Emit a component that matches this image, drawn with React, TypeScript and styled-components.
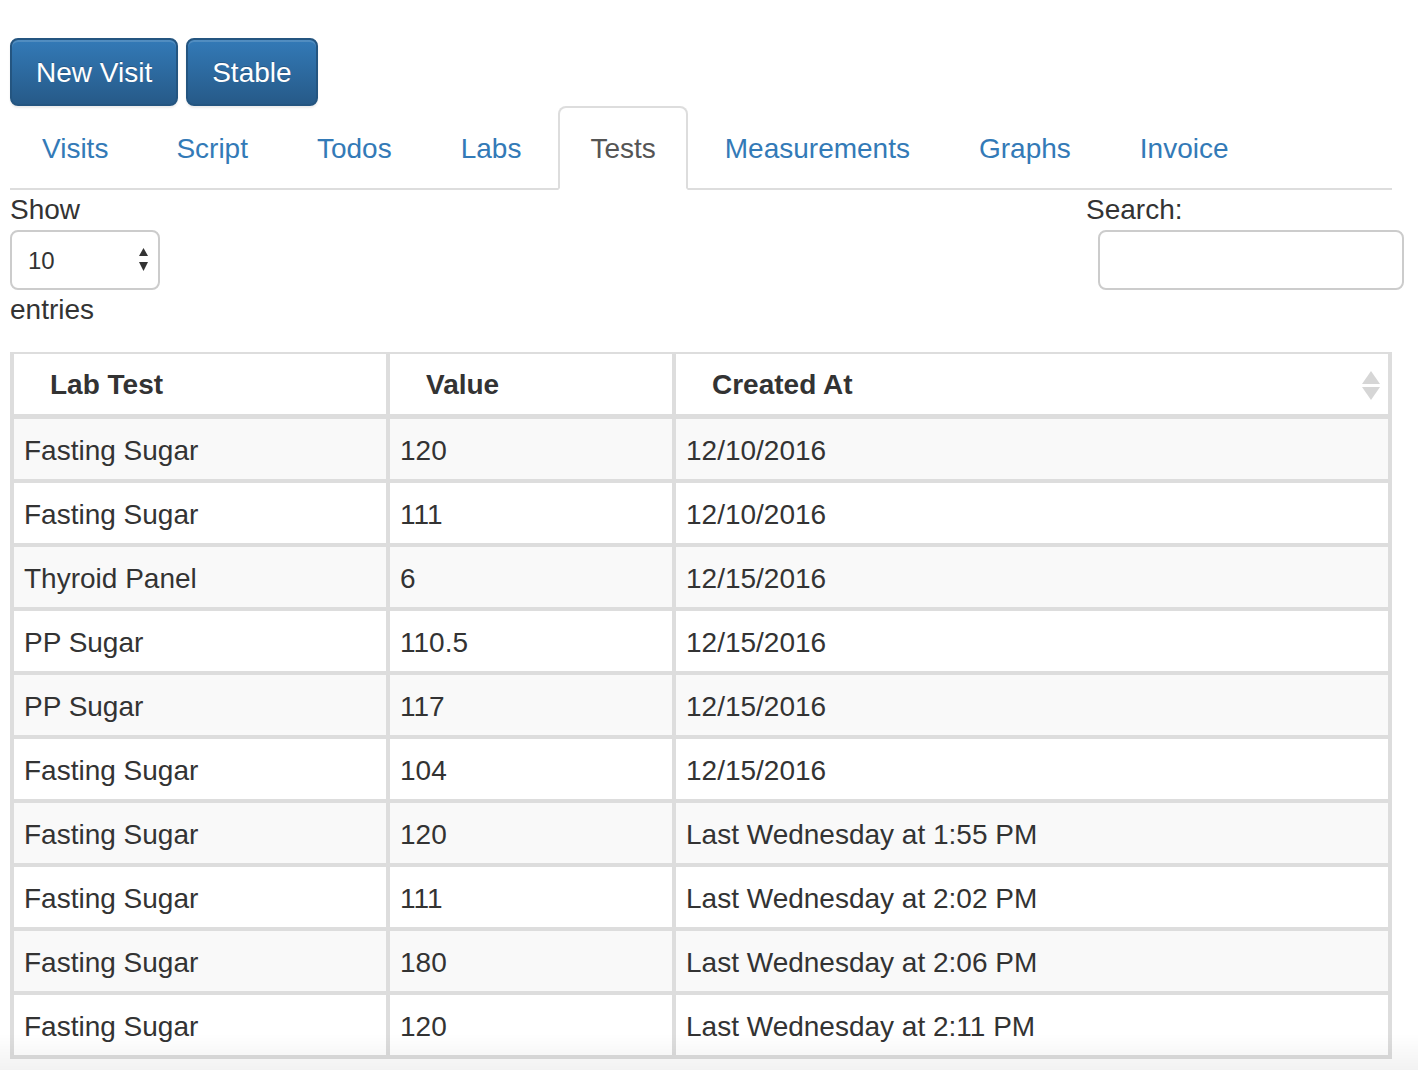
import React from "react";
import styled, { createGlobalStyle } from "styled-components";

interface LabRow {
  test: string;
  value: string;
  createdAt: string;
}

const tabs = ["Visits", "Script", "Todos", "Labs", "Tests", "Measurements", "Graphs", "Invoice"];

const rows: LabRow[] = [
  { test: "Fasting Sugar", value: "120", createdAt: "12/10/2016" },
  { test: "Fasting Sugar", value: "111", createdAt: "12/10/2016" },
  { test: "Thyroid Panel", value: "6", createdAt: "12/15/2016" },
  { test: "PP Sugar", value: "110.5", createdAt: "12/15/2016" },
  { test: "PP Sugar", value: "117", createdAt: "12/15/2016" },
  { test: "Fasting Sugar", value: "104", createdAt: "12/15/2016" },
  { test: "Fasting Sugar", value: "120", createdAt: "Last Wednesday at 1:55 PM" },
  { test: "Fasting Sugar", value: "111", createdAt: "Last Wednesday at 2:02 PM" },
  { test: "Fasting Sugar", value: "180", createdAt: "Last Wednesday at 2:06 PM" },
  { test: "Fasting Sugar", value: "120", createdAt: "Last Wednesday at 2:11 PM" },
];

const App = (): JSX.Element => {
  return (
    <>
      <GlobalStyle />
      <Page>
        <ButtonBar>
          <Button>New Visit</Button>
          <Button>Stable</Button>
        </ButtonBar>

        <Tabs>
          {tabs.map(tab => (
            <Tab key={tab} active={tab === "Tests"}>
              {tab}
            </Tab>
          ))}
        </Tabs>

        <Controls>
          <Length>
            <span>Show</span>
            <SelectWrap>
              <Select defaultValue="10">
                <option value="10">10</option>
                <option value="25">25</option>
                <option value="50">50</option>
                <option value="100">100</option>
              </Select>
              <SelectArrows width="9" height="24" viewBox="0 0 9 24">
                <polygon points="4.5,0 9,8 0,8" fill="#333" />
                <polygon points="0,14 9,14 4.5,23" fill="#333" />
              </SelectArrows>
            </SelectWrap>
            <span>entries</span>
          </Length>
          <Filter>
            <span>Search:</span>
            <SearchInput type="search" />
          </Filter>
        </Controls>

        <Table>
          <thead>
            <tr>
              <HeadCell width={376}>Lab Test</HeadCell>
              <HeadCell width={286}>Value</HeadCell>
              <HeadCell>
                Created At
                <SortIcon width="18" height="30" viewBox="0 0 18 30">
                  <polygon points="9,0 18,13 0,13" fill="#d6d6d6" />
                  <polygon points="0,16 18,16 9,29" fill="#d6d6d6" />
                </SortIcon>
              </HeadCell>
            </tr>
          </thead>
          <tbody>
            {rows.map((row, i) => (
              <Row key={i} striped={i % 2 === 0}>
                <Cell>{row.test}</Cell>
                <Cell>{row.value}</Cell>
                <Cell>{row.createdAt}</Cell>
              </Row>
            ))}
          </tbody>
        </Table>
      </Page>
      <BottomFade />
    </>
  );
};

const GlobalStyle = createGlobalStyle`
  * {
    box-sizing: border-box;
  }

  body {
    margin: 0;
    background: #fff;
    color: #333;
    font-family: "Liberation Sans", Arial, Helvetica, sans-serif;
    font-size: 28px;
    line-height: 40px;
  }
`;

const Page = styled.div`
  width: 1382px;
  margin-left: 10px;
  padding-top: 38px;
  padding-bottom: 40px;
`;

const ButtonBar = styled.div`
  display: flex;
  gap: 8px;
`;

const Button = styled.button`
  height: 68px;
  padding: 13px 24px 11px;
  border: 2px solid #245580;
  border-radius: 8px;
  background: linear-gradient(to bottom, #337ab7 0%, #265a88 100%);
  box-shadow: inset 0 2px 0 rgba(255, 255, 255, 0.15), 0 2px 2px rgba(0, 0, 0, 0.075);
  color: #fff;
  text-shadow: 0 -1px 0 rgba(0, 0, 0, 0.2);
  font-family: inherit;
  font-size: 28px;
  line-height: 40px;
  cursor: pointer;
`;

const Tabs = styled.ul`
  display: flex;
  margin: 0;
  padding: 0;
  list-style: none;
  border-bottom: 2px solid #ddd;
`;

const Tab = styled.li<{ active?: boolean }>`
  margin-right: 5px;
  margin-bottom: -2px;
  padding: 21px 30px 19px;
  border: 2px solid ${p => (p.active ? "#ddd" : "transparent")};
  border-bottom-color: transparent;
  border-radius: 8px 8px 0 0;
  background: ${p => (p.active ? "#fff" : "transparent")};
  color: ${p => (p.active ? "#555" : "#337ab7")};
  line-height: 40px;
  cursor: pointer;

  &:first-child {
    margin-right: 4px;
  }
`;

const Controls = styled.div`
  display: flex;
  justify-content: space-between;
  align-items: flex-start;
`;

const Length = styled.div`
  display: flex;
  flex-direction: column;
  align-items: flex-start;
`;

const SelectWrap = styled.div`
  position: relative;
  width: 150px;
  height: 60px;
`;

const Select = styled.select`
  width: 100%;
  height: 100%;
  padding: 0 16px;
  border: 2px solid #ccc;
  border-radius: 8px;
  background: #fff;
  color: #333;
  font-family: inherit;
  font-size: 24px;
  appearance: none;
  -webkit-appearance: none;
`;

const SelectArrows = styled.svg`
  position: absolute;
  top: 18px;
  right: 12px;
  pointer-events: none;
`;

const Filter = styled.div`
  display: flex;
  flex-direction: column;
  align-items: flex-start;
  margin-right: -12px;
`;

const SearchInput = styled.input`
  width: 306px;
  height: 60px;
  margin-left: 12px;
  padding: 0 16px;
  border: 2px solid #ccc;
  border-radius: 8px;
  font-family: inherit;
  font-size: 28px;
  outline: none;
`;

const Table = styled.table`
  width: 100%;
  margin-top: 22px;
  table-layout: fixed;
  border-collapse: separate;
  border-spacing: 0;
  border: 2px solid #ddd;
  border-top: none;
`;

const HeadCell = styled.th<{ width?: number }>`
  position: relative;
  width: ${p => (p.width ? `${p.width}px` : "auto")};
  height: 65px;
  padding: 11px 36px 9px;
  border: 2px solid #ddd;
  border-bottom-width: 3px;
  background: #fff;
  text-align: left;
  font-weight: bold;
  line-height: 40px;
`;

const SortIcon = styled.svg`
  position: absolute;
  top: 17px;
  right: 8px;
`;

const Row = styled.tr<{ striped?: boolean }>`
  background: ${p => (p.striped ? "#f9f9f9" : "#fff")};
`;

const Cell = styled.td`
  height: 64px;
  padding: 12px 10px 8px;
  border: 2px solid #ddd;
  line-height: 40px;
  white-space: nowrap;
`;

const BottomFade = styled.div`
  position: fixed;
  left: 0;
  right: 0;
  bottom: 0;
  height: 36px;
  background: linear-gradient(to bottom, rgba(0, 0, 0, 0), rgba(0, 0, 0, 0.05));
  pointer-events: none;
`;

export default App;
